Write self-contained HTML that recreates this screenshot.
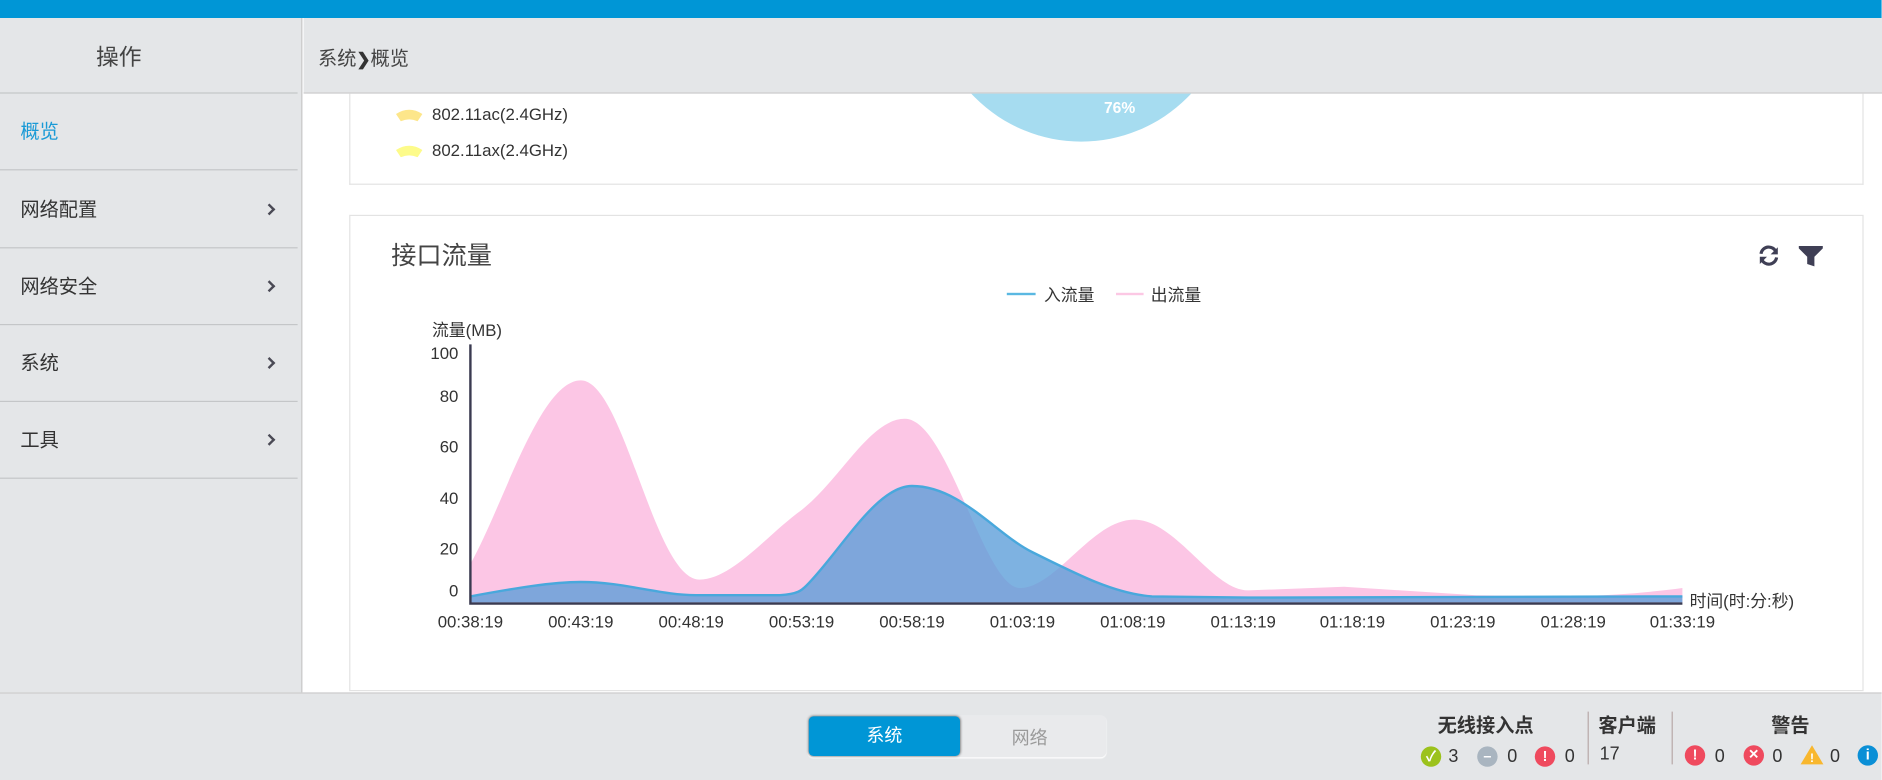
<!DOCTYPE html>
<html><head><meta charset="utf-8"><style>
*{margin:0;padding:0;box-sizing:border-box}
html,body{width:1882px;height:779px;overflow:hidden;background:#fff}
#w{position:absolute;left:0;top:0;width:1568.4px;height:649.2px;transform:scale(1.2);transform-origin:0 0;font-family:"Liberation Sans","Noto Sans CJK SC",sans-serif;color:#333}
.a{position:absolute}
.t{position:absolute;white-space:nowrap}
.sep{position:absolute;left:0;width:248px;height:1px;background:#c4c6c8}
.chev{position:absolute;left:221px;width:7px;height:7px;border-right:2.6px solid #4a4a55;border-top:2.6px solid #4a4a55;transform:rotate(45deg)}
.ic{position:absolute;width:17px;height:17px;border-radius:50%;color:#fff;font-size:12px;font-weight:bold;text-align:center;line-height:17px}
.n{position:absolute;font-size:15px;color:#333}
</style></head><body><div id="w">
<div class="a" style="left:0;top:0;width:1568.4px;height:15px;background:#0096d6"></div>
<!-- sidebar -->
<div class="a" style="left:0;top:15px;width:252px;height:562px;background:#e4e6e8;border-right:1px solid #c8c8c8"></div>
<div class="t" style="left:80px;top:33px;font-size:19px;color:#444">操作</div>
<div class="sep" style="top:77px"></div>
<div class="t" style="left:17px;top:96px;font-size:16px;color:#1a9ad6">概览</div>
<div class="sep" style="top:141px"></div>
<div class="t" style="left:17px;top:161px;font-size:16px;color:#333">网络配置</div><div class="chev" style="top:171px"></div>
<div class="sep" style="top:206px"></div>
<div class="t" style="left:17px;top:225px;font-size:16px;color:#333">网络安全</div><div class="chev" style="top:235px"></div>
<div class="sep" style="top:270px"></div>
<div class="t" style="left:17px;top:289px;font-size:16px;color:#333">系统</div><div class="chev" style="top:299px"></div>
<div class="sep" style="top:334px"></div>
<div class="t" style="left:17px;top:353px;font-size:16px;color:#333">工具</div><div class="chev" style="top:363px"></div>
<div class="sep" style="top:398px"></div>
<!-- header -->
<div class="a" style="left:253px;top:15px;width:1316px;height:63px;background:#e4e6e8;border-bottom:1px solid #ccc"></div>
<div class="t" style="left:265px;top:35px;font-size:16px;color:#444">系统<b style="font-size:14px;color:#333">❯</b>概览</div>
<!-- card1 -->
<div class="a" style="left:291px;top:78px;width:1262px;height:76px;border:1px solid #e3e3e3;border-top:none;overflow:hidden">
<div class="a" style="left:484px;top:-210px;width:250px;height:250px;border-radius:50%;background:#a6dcf0"></div>
<div class="t" style="left:628px;top:4px;font-size:13px;color:#fff;font-weight:bold">76%</div>
</div>
<svg class="a" style="left:329px;top:89px" width="24" height="42"><path d="M1 6 Q12 -1 23 6 L19 12 Q12 9 5 12Z" fill="#fde68a"/><path d="M1 36 Q12 29 23 36 L19 42 Q12 39 5 42Z" fill="#fdfb8a"/></svg>
<div class="t" style="left:360px;top:87px;font-size:14px;color:#333">802.11ac(2.4GHz)</div>
<div class="t" style="left:360px;top:117px;font-size:14px;color:#333">802.11ax(2.4GHz)</div>
<!-- card2 -->
<div class="a" style="left:291px;top:179px;width:1262px;height:397px;border:1px solid #e3e3e3"></div>
<div class="t" style="left:326px;top:197px;font-size:21px;color:#444">接口流量</div>
<svg class="a" style="left:1464px;top:203px" width="60" height="20" viewBox="0 0 60 20">
<path d="M3.5 8.5 A6.5 6.5 0 0 1 16 7" fill="none" stroke="#3f3f55" stroke-width="2.6"/><path d="M17.5 3 L17.5 9 L11.5 9Z" fill="#3f3f55"/>
<path d="M16.5 11.5 A6.5 6.5 0 0 1 4 13" fill="none" stroke="#3f3f55" stroke-width="2.6"/><path d="M2.5 17 L2.5 11 L8.5 11Z" fill="#3f3f55"/>
<path d="M35 2 L55 2 L55 4 L48 11 L48 19 L42 17 L42 11 L35 4Z" fill="#3f3f55"/></svg>
<div class="a" style="left:839px;top:244px;width:24px;height:2px;background:#5ab8e2"></div>
<div class="t" style="left:870px;top:236px;font-size:14px;color:#333">入流量</div>
<div class="a" style="left:930px;top:244px;width:23px;height:2px;background:#fcc8e4"></div>
<div class="t" style="left:959px;top:236px;font-size:14px;color:#333">出流量</div>
<div class="t" style="left:360px;top:265px;font-size:14px;color:#333">流量(MB)</div>
<svg class="a" style="left:0;top:0" width="1568" height="577">
<path d="M392 470 C420 420,450 317,484 317 C520 317,545 483,583 483 C610 483,640 445,668 425 C700 400,725 349,754 349 C790 349,820 490,850 490 C880 490,910 433,945 433 C980 433,1010 492,1040 492 L1120 489 L1230 496 L1310 497 C1350 496,1380 493,1402 490 L1402 502 L392 502Z" fill="#fcc6e5"/>
<path d="M392 497 C430 490,460 485,484 485 C520 485,550 496,580 496 L650 496 C665 495,668 492,672 488 C700 460,730 405,760 405 C800 405,830 445,860 460 C900 480,930 495,960 497 L1040 498 L1402 497 L1402 502 L392 502Z" fill="#5a9cd8" fill-opacity=".78"/>
<path d="M392 497 C430 490,460 485,484 485 C520 485,550 496,580 496 L650 496 C665 495,668 492,672 488 C700 460,730 405,760 405 C800 405,830 445,860 460 C900 480,930 495,960 497 L1040 498 L1402 497" fill="none" stroke="#49a8dc" stroke-width="2"/>
<path d="M392 287 L392 503 L1402 503" fill="none" stroke="#3a3a50" stroke-width="2"/>
<g font-size="14" fill="#333" font-family="Liberation Sans,sans-serif">
<text x="382" y="299" text-anchor="end">100</text><text x="382" y="335" text-anchor="end">80</text><text x="382" y="377" text-anchor="end">60</text><text x="382" y="420" text-anchor="end">40</text><text x="382" y="462" text-anchor="end">20</text><text x="382" y="497" text-anchor="end">0</text>
<g text-anchor="middle"><text x="392" y="523">00:38:19</text><text x="484" y="523">00:43:19</text><text x="576" y="523">00:48:19</text><text x="668" y="523">00:53:19</text><text x="760" y="523">00:58:19</text><text x="852" y="523">01:03:19</text><text x="944" y="523">01:08:19</text><text x="1036" y="523">01:13:19</text><text x="1127" y="523">01:18:19</text><text x="1219" y="523">01:23:19</text><text x="1311" y="523">01:28:19</text><text x="1402" y="523">01:33:19</text></g>
<text x="1408" y="506" font-family="Liberation Sans,Noto Sans CJK SC,sans-serif">时间(时:分:秒)</text></g>
</svg>
<!-- footer -->
<div class="a" style="left:0;top:577px;width:1568.4px;height:73px;background:#e4e6e8;border-top:1px solid #ccc"></div>
<div class="a" style="left:673px;top:596px;width:249px;height:35px;background:#e9eaec;border-radius:5px;box-shadow:0 1px 1px #fff"></div>
<div class="a" style="left:674px;top:597px;width:126px;height:33px;background:#0096d6;border-radius:4px;box-shadow:0 0 2px #666;color:#fff;font-size:15px;text-align:center;line-height:33px">系统</div>
<div class="t" style="left:843px;top:604px;font-size:15px;color:#9a9a9a">网络</div>
<div class="t" style="left:1198px;top:591px;font-size:16px;font-weight:bold;color:#333">无线接入点</div>
<div class="t" style="left:1332px;top:591px;font-size:16px;font-weight:bold;color:#333">客户端</div>
<div class="t" style="left:1476px;top:591px;font-size:16px;font-weight:bold;color:#333">警告</div>
<div class="a" style="left:1323px;top:593px;width:1px;height:44px;background:#b8a8a8"></div>
<div class="a" style="left:1393px;top:593px;width:1px;height:44px;background:#b8a8a8"></div>
<div class="ic" style="left:1184px;top:622px;background:#9cc21c">✓</div><div class="n" style="left:1207px;top:622px">3</div>
<div class="ic" style="left:1231px;top:622px;background:#a9b5c0">–</div><div class="n" style="left:1256px;top:622px">0</div>
<div class="ic" style="left:1279px;top:622px;background:#ef4a5e">!</div><div class="n" style="left:1304px;top:622px">0</div>
<div class="n" style="left:1333px;top:620px">17</div>
<div class="ic" style="left:1404px;top:621px;background:#ef4a5e">!</div><div class="n" style="left:1429px;top:622px">0</div>
<div class="ic" style="left:1453px;top:621px;background:#ef4a5e;font-size:11px">✕</div><div class="n" style="left:1477px;top:622px">0</div>
<svg class="a" style="left:1500px;top:620px" width="20" height="18"><path d="M10 1 L19.5 17 L0.5 17Z" fill="#f8b72e"/><text x="10" y="15" font-size="10" fill="#fff" text-anchor="middle" font-weight="bold">!</text></svg><div class="n" style="left:1525px;top:622px">0</div>
<div class="ic" style="left:1548px;top:621px;background:#0a8fd6">i</div>
</div></body></html>
